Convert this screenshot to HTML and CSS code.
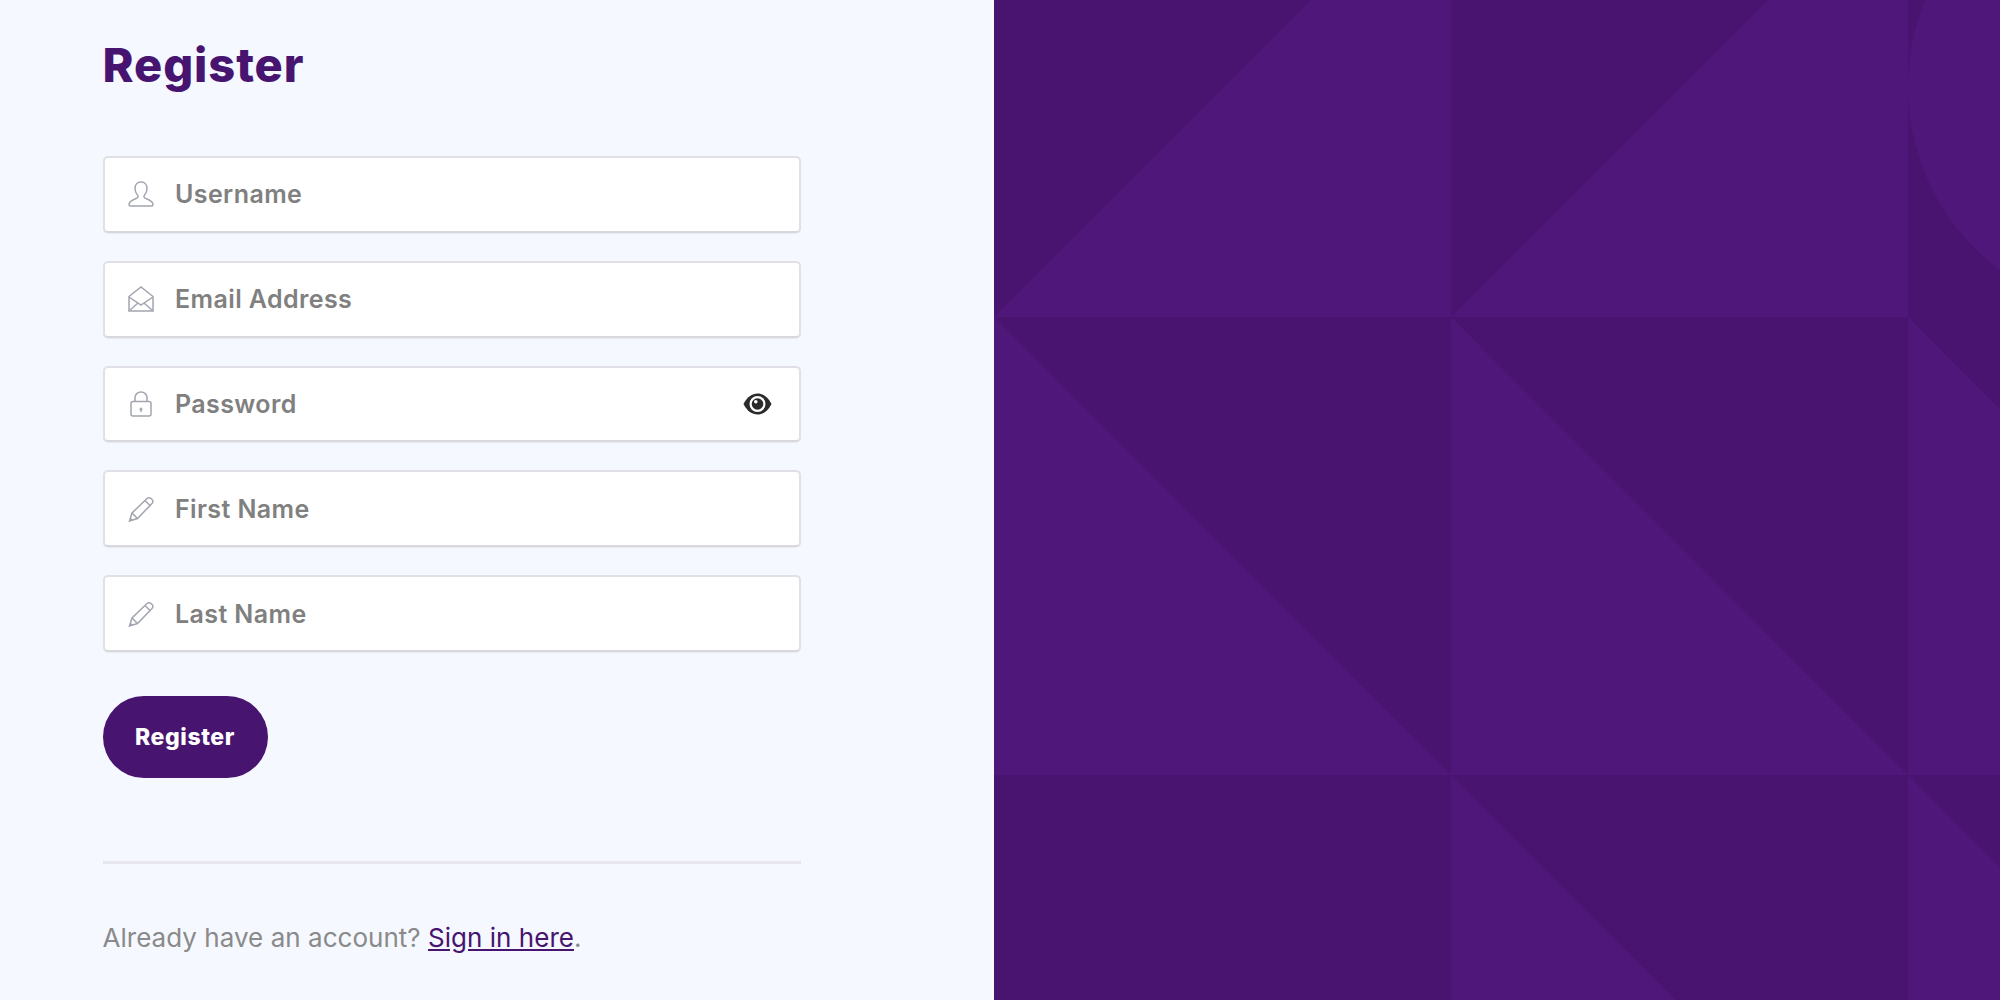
FILE: index.html
```html
<!DOCTYPE html>
<html>
<head>
  <title>Register</title>
  <link rel="stylesheet" href="styles.css">
</head>
<body>
  <div class="page">
    <div class="form-side">
      <h1 class="title">Register</h1>
      <form class="form" action="#">
        <div class="field">
          <svg class="icon" viewBox="0 0 26 26"><path d="M13 1c-4 0-6 3-6 6.500 0 3 1 5 2.500 6.500.5.600.5 2.200 0 2.800-1 1-8.500 2.500-8.500 6.700 0 1 .7 1.500 1.500 1.500h21c.8 0 1.500-.5 1.500-1.500 0-4.200-7.500-5.700-8.500-6.700-.5-.6-.5-2.200 0-2.800 1.500-1.500 2.500-3.500 2.500-6.500C19 4 17 1 13 1z"/></svg>
          <span class="placeholder">Username</span>
        </div>
        <div class="field">
          <svg class="icon" viewBox="0 0 26 26"><path d="M1 10.500 13 1l12 9.500V25H1z"/><path d="M1 11l12 8 12-8"/><path d="M1 25l9-8M25 25l-9-8"/></svg>
          <span class="placeholder">Email Address</span>
        </div>
        <div class="field">
          <svg class="icon" viewBox="0 0 26 26"><rect x="3" y="10.500" width="20" height="14.500" rx="2"/><path d="M7 10.500V6.500a6 5.500 0 0 1 12 0v4"/><path d="M13 21v-3.500M11.700 18.700l1.300-1.400 1.300 1.400"/></svg>
          <span class="placeholder">Password</span>
          <svg class="eye" viewBox="0 0 29 22">
            <path class="eye-dark" d="M.5 11C4 4 9 .5 14.500.5S25 4 28.500 11C25 18 20 21.500 14.500 21.500S4 18 .5 11z"/>
            <circle class="eye-light" cx="14.500" cy="11" r="8"/>
            <circle class="eye-dark" cx="14.500" cy="11" r="5.800"/>
            <circle class="eye-light" cx="12.800" cy="8.800" r="1.800"/>
          </svg>
        </div>
        <div class="field">
          <svg class="icon" viewBox="0 0 26 26"><path d="M1.500 25 4 17 19 2.500q2-1.500 4 0L24.500 4q1 2-.5 3.500L9.500 22.500z"/><path d="M4 17l5.500 5.500M17 4.500l5.500 5.500"/><path class="tip" d="M1.500 25l1-3.500 2.500 2.500z"/></svg>
          <span class="placeholder">First Name</span>
        </div>
        <div class="field">
          <svg class="icon" viewBox="0 0 26 26"><path d="M1.500 25 4 17 19 2.500q2-1.500 4 0L24.500 4q1 2-.5 3.500L9.500 22.500z"/><path d="M4 17l5.500 5.500M17 4.500l5.500 5.500"/><path class="tip" d="M1.500 25l1-3.500 2.500 2.500z"/></svg>
          <span class="placeholder">Last Name</span>
        </div>
        <button class="btn" type="submit">Register</button>
      </form>
      <hr class="divider">
      <p class="signin">Already have an account? <a href="#">Sign in here</a>.</p>
    </div>

    <div class="art-side">
      <svg class="pattern" viewBox="994 0 1006 1000">
        <rect class="dark" x="994" y="0" width="1006" height="1000"/>
        <!-- top row -->
        <polygon class="light" points="994,317 1451,-140 1451,317"/>
        <polygon class="light" points="1451,317 1908,-140 1908,317"/>
        <circle class="light" cx="2136.500" cy="87" r="228.500"/>
        <!-- middle row -->
        <polygon class="light" points="994,317 1451,775 994,775"/>
        <polygon class="light" points="1451,317 1908,775 1451,775"/>
        <polygon class="light" points="1908,317 2365,775 1908,775"/>
        <!-- bottom row -->
        <polygon class="light" points="1451,775 1908,1233 1451,1233"/>
        <polygon class="light" points="1908,775 2365,1233 1908,1233"/>
      </svg>
    </div>
  </div>
</body>
</html>
```

FILE: styles.css
```css
body {
  margin: 0;
  background-color: #f5f8ff;
  font-family: Inter, "Liberation Sans", sans-serif;
}

.page {
  display: flex;
  height: 1000px;
  overflow: hidden;
}

.form-side {
  width: 994px;
  padding: 36px 193px 0 102.500px;
  box-sizing: border-box;
  flex-shrink: 0;
}

.title {
  margin: 0 0 63px;
  font-size: 47px;
  line-height: 57px;
  font-weight: 800;
  letter-spacing: 0.9px;
  color: #47146f;
}

.field {
  display: flex;
  align-items: center;
  gap: 21px;
  height: 76.800px;
  margin-bottom: 28px;
  padding: 0 27px 0 23.500px;
  box-sizing: border-box;
  background-color: #fff;
  border: 2px solid #e0e0e6;
  border-bottom-color: #d8d8dc;
  border-radius: 5px;
  box-shadow: 0 1px 1px rgba(0, 0, 0, 0.06);
}

.icon {
  width: 26px;
  height: 26px;
  flex-shrink: 0;
  fill: none;
  stroke: #a3a5b0;
  stroke-width: 1.500;
}

.icon .tip {
  fill: #a3a5b0;
  stroke: none;
}

.placeholder {
  font-size: 25px;
  font-weight: 600;
  letter-spacing: 0.4px;
  color: #808080;
}

.eye {
  width: 29px;
  height: 22px;
  margin-left: auto;
}

.eye-dark {
  fill: #2b2b2b;
}

.eye-light {
  fill: #fff;
}

.btn {
  display: block;
  width: 165px;
  height: 82px;
  margin-top: 44px;
  padding: 0;
  border: none;
  border-radius: 41px;
  background-color: #47146f;
  color: #fff;
  font-family: inherit;
  font-size: 23px;
  font-weight: 800;
  letter-spacing: 0.6px;
}

.divider {
  height: 3px;
  margin: 83px 0 0;
  border: none;
  background-color: #e6e6ec;
}

.signin {
  margin: 58px 0 0;
  font-size: 26px;
  line-height: 32px;
  letter-spacing: 0.03px;
  color: #8a8a8a;
}

.signin a {
  color: #47146f;
}

.art-side {
  flex: 1;
}

.pattern {
  display: block;
  width: 1006px;
  height: 1000px;
}

.dark {
  fill: #491470;
}

.light {
  fill: #50177a;
}
```
